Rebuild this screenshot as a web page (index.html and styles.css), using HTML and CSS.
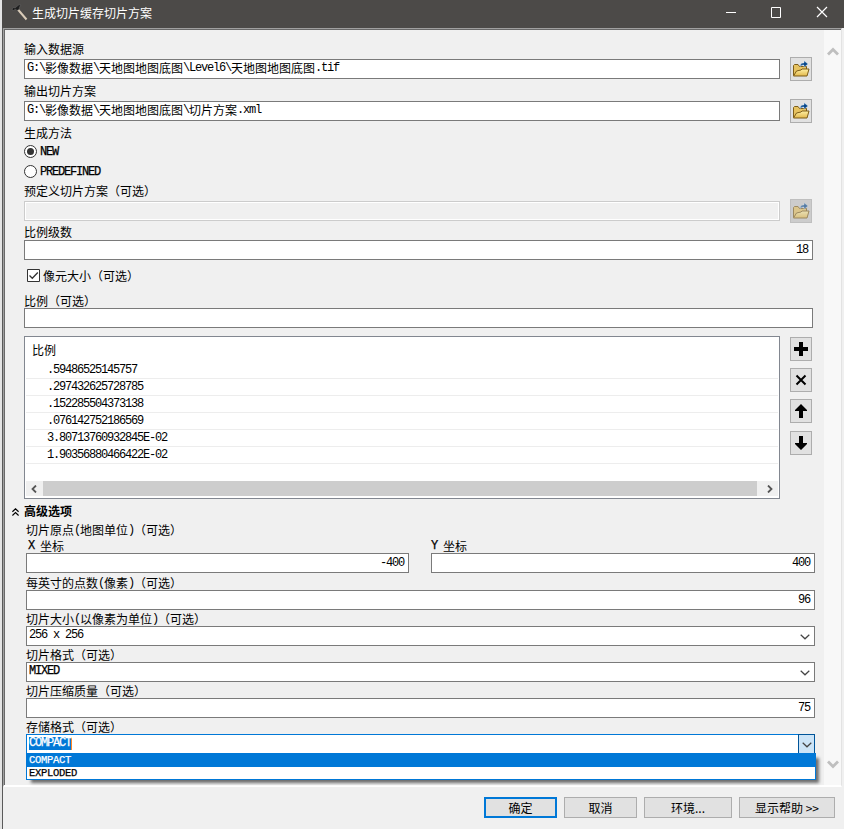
FILE: index.html
```html
<!DOCTYPE html>
<html lang="zh-CN">
<head>
<meta charset="utf-8">
<title>生成切片缓存切片方案</title>
<link rel="stylesheet" href="styles.css">
</head>
<body>
<svg class="defs" width="0" height="0">
  <defs>
    <linearGradient id="gold" x1="0" y1="0" x2="0" y2="1"><stop offset="0" stop-color="#fff0a4"/><stop offset="1" stop-color="#e2b84c"/></linearGradient>
    <symbol id="folder" viewBox="0 0 18 18">
      <path d="M1.500 15.500V5.500L2.500 4.500H6L7.500 6.500H14.500V9" fill="#e6c260" stroke="#7d5d18"/>
      <path d="M1.500 16L4.500 11L9 10L10 9H17L15 16Z" fill="url(#gold)" stroke="#7d5d18"/>
      <path d="M8.500 6.500Q8 3 11 3H12V.8L16 4L12 7.200V5H11Q9.800 5 8.500 6.500Z" fill="#06468a" stroke="#d8edff" stroke-width=".4"/>
    </symbol>
    <symbol id="chev" viewBox="0 0 10 6"><path d="M.7.7L5 4.800L9.300.7" fill="none" stroke="currentColor" stroke-width="1.200"/></symbol>
  </defs>
</svg>
<div class="window">
  <header class="titlebar">
    <svg class="hammer" width="18" height="18" viewBox="0 0 18 18"><path d="M6.500 5L15.500 15.500" stroke="#d9cbb8" stroke-width="2"/><path d="M1 5.500L2 3.500L4 4L8 .8L10 1L8.500 3L8 5.500L6 6.500L4.500 5L2.500 6.500Z" fill="#1d1d1d" stroke="#777" stroke-width=".4"/></svg>
    <h1>生成切片缓存切片方案</h1>
    <svg class="winbtns" width="104" height="14" viewBox="0 0 104 14" fill="none" stroke="#fff"><path d="M0 6.500H10"/><path d="M45.500 1.500H54.500V11.500H45.500Z"/><path d="M91 1L101 11M101 1L91 11" stroke-width="1.200"/></svg>
  </header>
  <main class="panel">
    <div class="form">
      <section class="basic">
        <label class="lbl h19 up">输入数据源</label>
        <div class="line"><div class="box"><i>G:\</i>影像数据<i>\</i>天地图地图底图<i>\Level6\</i>天地图地图底图<i>.tif</i></div><button class="tool"><svg width="18" height="18"><use href="#folder"/></svg></button></div>
        <label class="lbl h19 gap3 up">输出切片方案</label>
        <div class="line"><div class="box"><i>G:\</i>影像数据<i>\</i>天地图地图底图<i>\</i>切片方案<i>.xml</i></div><button class="tool"><svg width="18" height="18"><use href="#folder"/></svg></button></div>
        <label class="lbl h18 gap3">生成方法</label>
        <div class="radio"><svg width="13" height="13"><circle cx="6.500" cy="6.500" r="6" fill="#fff" stroke="#333"/><circle cx="6.500" cy="6.500" r="3.500" fill="#333"/></svg><i class="caps">NEW</i></div>
        <div class="radio"><svg width="13" height="13"><circle cx="6.500" cy="6.500" r="6" fill="#fff" stroke="#333"/></svg><i class="caps">PREDEFINED</i></div>
        <label class="lbl h19 up">预定义切片方案（可选）</label>
        <div class="line"><div class="box disabled"></div><button class="tool off"><svg width="18" height="18"><use href="#folder"/></svg></button></div>
        <label class="lbl h16 gap3">比例级数</label>
        <div class="box num"><i>18</i></div>
        <div class="check"><svg width="13" height="13"><path d="M.5.5H12.500V12.500H.5Z" fill="#fff" stroke="#333"/><path d="M2.500 6.500L5.300 9.300L10.800 3.500" fill="none" stroke="#333" stroke-width="1.300"/></svg><span>像元大小（可选）</span></div>
        <label class="lbl h15 gap2">比例（可选）</label>
        <div class="box"></div>
        <div class="listrow">
          <div class="list">
            <div class="listhead">比例</div>
            <ul>
              <li><i>.59486525145757</i></li>
              <li><i>.297432625728785</i></li>
              <li><i>.152285504373138</i></li>
              <li><i>.076142752186569</i></li>
              <li><i>3.80713760932845E-02</i></li>
              <li><i>1.90356880466422E-02</i></li>
            </ul>
            <div class="hscroll"><svg width="6" height="8" viewBox="0 0 6 8"><path d="M5 .5L1.500 4L5 7.500" fill="none" stroke="#555" stroke-width="1.800"/></svg><div class="thumb"></div><svg width="6" height="8" viewBox="0 0 6 8"><path d="M1 .5L4.500 4L1 7.500" fill="none" stroke="#555" stroke-width="1.800"/></svg></div>
          </div>
          <div class="tools">
            <button class="tool"><svg width="14" height="14"><path d="M5 0H9V5H14V9H9V14H5V9H0V5H5Z"/></svg></button>
            <button class="tool"><svg width="14" height="14"><path d="M2.500 2.500L11.500 11.500M11.500 2.500L2.500 11.500" stroke="#000" stroke-width="2"/></svg></button>
            <button class="tool"><svg width="14" height="14"><path d="M7 0L13 6V7H9V14H5V7H1V6Z"/></svg></button>
            <button class="tool last"><svg width="14" height="14"><path d="M7 14L13 8V7H9V0H5V7H1V8Z"/></svg></button>
          </div>
        </div>
      </section>
      <h2><svg width="7" height="8" viewBox="0 0 7 8" fill="none" stroke="#000" stroke-width="1.200"><path d="M.4 3.700L3.500.8L6.600 3.700M.4 7.500L3.500 4.600L6.600 7.500"/></svg>高级选项</h2>
      <section class="advanced">
        <label class="lbl h16">切片原点<i>(</i>地图单位<i>)</i>（可选）</label>
        <div class="coords">
          <div><label class="lbl h15 in"><i class="caps">X </i>坐标</label><div class="box num"><i>-400</i></div></div>
          <div><label class="lbl h15"><i class="caps">Y </i>坐标</label><div class="box num"><i>400</i></div></div>
        </div>
        <label class="lbl h14 gap3">每英寸的点数<i>(</i>像素<i>)</i>（可选）</label>
        <div class="box num"><i>96</i></div>
        <label class="lbl h14 gap2">切片大小<i>(</i>以像素为单位<i>)</i>（可选）</label>
        <div class="box combo"><i>256 x 256</i><svg width="10" height="6"><use href="#chev"/></svg></div>
        <label class="lbl h14 gap2">切片格式（可选）</label>
        <div class="box combo"><i class="caps">MIXED</i><svg width="10" height="6"><use href="#chev"/></svg></div>
        <label class="lbl h14 gap2">切片压缩质量（可选）</label>
        <div class="box num"><i>75</i></div>
        <label class="lbl h14 gap2">存储格式（可选）</label>
        <div class="box combo open"><i class="caps sel">COMPACT</i><span class="drop"><svg width="10" height="6"><use href="#chev"/></svg></span>
          <div class="menu"><div class="opt on"><i class="caps">COMPACT</i></div><div class="opt"><i class="caps">EXPLODED</i></div></div>
        </div>
      </section>
    </div>
    <div class="vscroll"><svg width="12" height="9" viewBox="0 0 12 9"><path d="M1 7.500L6 2.500L11 7.500" fill="none" stroke="#bfbfbf" stroke-width="2.800"/></svg><svg width="12" height="9" viewBox="0 0 12 9"><path d="M1 1.500L6 6.500L11 1.500" fill="none" stroke="#bfbfbf" stroke-width="2.800"/></svg></div>
  </main>
  <footer>
    <button class="btn primary">确定</button>
    <button class="btn">取消</button>
    <button class="btn env">环境...</button>
    <button class="btn help">显示帮助 &gt;&gt;</button>
  </footer>
</div>
</body>
</html>
```
FILE: styles.css
```css
* { box-sizing: border-box; }
body {
  margin: 0; width: 844px; height: 829px; overflow: hidden; background: #e4e4e4; color: #000;
  font: 12px/16px "Noto Sans CJK SC", "Liberation Sans", sans-serif;
  text-spacing-trim: space-all; white-space: nowrap;
}
.defs { position: absolute; }
svg { display: block; flex: none; }
i { font-family: "Liberation Mono", monospace; font-style: normal; font-size: 12px; letter-spacing: -1.2px; white-space: pre; }
i.caps { -webkit-text-stroke: .25px currentColor; }
button { font: inherit; color: inherit; margin: 0; padding: 0; }
.window { margin-left: 2px; height: 829px; background: #f0f0f0; border-left: 1px solid #5a5a5a; }
.titlebar { height: 28px; margin-left: -1px; background: #4c4a48; display: flex; align-items: center; padding: 0 14px 3px 9px; }
.titlebar h1 { flex: 1; margin: 0 0 0 3px; font-size: 12px; font-weight: 400; color: #fff; }
.panel { height: 759px; margin-right: 2px; display: flex; border: 1px solid #a0a0a0; border-right-color: #e3e3e3; border-bottom: 2px solid #fff; box-shadow: inset 1px 1px 0 #696969; padding: 1px 0 0 1px; }
.form { width: 819px; padding-top: 10px; }
.vscroll { flex: 1; background: #f8f8f8; display: flex; flex-direction: column; align-items: center; justify-content: space-between; padding: 17px 0 16px; }
.basic { width: 789px; margin-left: 19px; }
.lbl { display: flex; align-items: center; }
.lbl i { line-height: 14px; }
.up { padding-bottom: 2px; }
.h14 { height: 14px; } .h15 { height: 15px; } .h16 { height: 16px; } .h18 { height: 18px; } .h19 { height: 19px; }
.gap2 { margin-top: 2px; } .gap3 { margin-top: 3px; }
.in { padding-left: 2px; }
.line { display: flex; justify-content: space-between; align-items: center; height: 20px; padding-right: 1px; }
.line .box { width: 756px; }
.box { height: 20px; background: #fff; border: 1px solid #7a7a7a; padding: 0 4px 2px 2px; display: flex; align-items: center; line-height: 16px; }
.box.num { justify-content: flex-end; padding-bottom: 1px; }
.box.disabled { background: #f0f0f0; border-color: #ccc; box-shadow: inset 0 0 0 1px #fff; }
.tool { width: 22px; height: 24px; border: 1px solid #adadad; background: #e1e1e1; display: flex; align-items: center; justify-content: center; }
.tool.off { background: #ccc; border-color: #bfbfbf; }
.off svg { opacity: .6; }
.radio { height: 20px; display: flex; align-items: center; gap: 3px; padding-bottom: 1px; }
.check { height: 31px; display: flex; align-items: center; gap: 3px; padding-left: 3px; }
.listrow { display: flex; justify-content: space-between; margin-top: 8px; padding-right: 1px; }
.list { width: 756px; height: 163px; border: 1px solid #828790; background: #fff; display: flex; flex-direction: column; padding: 0 1px 2px; }
.listhead { height: 25px; line-height: 26px; padding-left: 6px; }
ul { list-style: none; margin: 0; padding: 0; flex: 1; }
li { height: 17px; border-bottom: 1px solid #ededed; padding-left: 21px; }
li i { display: block; line-height: 17px; }
.hscroll { height: 15px; background: #f0f0f0; display: flex; align-items: center; justify-content: space-between; padding: 0 5px; }
.thumb { width: 714px; height: 15px; background: #cdcdcd; margin-right: 5px; }
.tools { display: flex; flex-direction: column; gap: 7px; padding-top: 1px; }
.last { margin-top: 1px; }
h2 { margin: 0; height: 23px; padding-left: 7px; font-size: 12px; font-weight: 700; display: flex; align-items: center; gap: 5px; }
h2 svg { margin-top: 2px; }
.advanced { width: 789px; margin-left: 21px; }
.coords { display: grid; grid-template-columns: 383px 384px; justify-content: space-between; }
.combo { justify-content: space-between; }
.combo svg { margin-top: 3px; color: #444; }
.combo.open { position: relative; border-color: #0078d7; padding-right: 0; }
.sel { background: #0078d7; color: #fff; height: 13px; line-height: 13px; border-right: 1px solid #ff8728; }
.drop { width: 17px; height: 20px; margin: 0 -1px -2px 0; border: 1px solid #005499; background: #cce4f7; display: flex; align-items: center; justify-content: center; }
.drop svg { margin-top: 2px; }
.menu { position: absolute; left: -1px; top: 18px; width: 790px; height: 27px; border: 1px solid #0078d7; background: #fff; box-shadow: 4px 4px 3px -1px rgba(0,0,0,.55); }
.opt { height: 12px; padding-left: 2px; }
.opt i.caps { display: block; font-size: 10.5px; letter-spacing: -.3px; line-height: 12px; }
.opt.on { background: #0078d7; color: #fff; height: 13px; }
footer { height: 42px; display: flex; justify-content: flex-end; gap: 7px; padding: 10px 9px 0 0; }
.btn { width: 73px; height: 21px; border: 1px solid #adadad; background: #e1e1e1; line-height: 18px; }
.primary { border: 2px solid #0078d7; line-height: 16px; }
.env { width: 88px; }
.help { width: 96px; }
```
